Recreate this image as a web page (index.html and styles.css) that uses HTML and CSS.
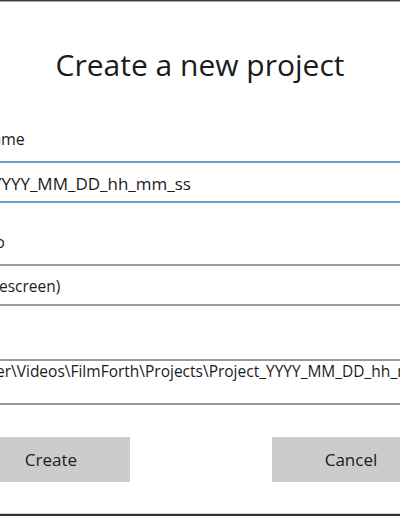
FILE: index.html
```html
<!DOCTYPE html>
<html lang="en">
<head>
<meta charset="utf-8">
<title>Create a new project</title>
<link rel="stylesheet" href="styles.css">
</head>
<body>
  <div class="dialog">
    <h1 class="title">Create a new project</h1>

    <div class="field field-name">
      <div class="label">Project name</div>
      <div class="box box-focus"><span class="box-text text-name">Project_YYYY_MM_DD_hh_mm_ss</span></div>
    </div>

    <div class="field field-ratio">
      <div class="label label-ratio">Aspect ratio</div>
      <div class="box box-ratio"><span class="box-text text-ratio">16:9 (Widescreen)</span></div>
    </div>

    <div class="field field-path">
      <div class="label">Location</div>
      <div class="box box-path"><span class="box-text text-path">C:\Users\User\Videos\FilmForth\Projects\Project_YYYY_MM_DD_hh_mm_ss</span></div>
    </div>

    <div class="actions">
      <button class="btn" type="button">Create</button>
      <button class="btn" type="button">Cancel</button>
    </div>
  </div>
</body>
</html>
```

FILE: styles.css
```css
* {
  box-sizing: border-box;
}

html {
  background: #ffffff;
}

body {
  margin: 0;
  width: 400px;
  height: 516px;
  overflow: hidden;
  background: #ffffff;
  border-top: 1px solid #3f3f3f;
  border-bottom: 2px solid #333333;
  box-shadow: inset 0 1px 0 #a8a8a8, inset 0 -1px 0 #d2d2d2;
  display: flex;
  justify-content: center;
  font-family: "Open Sans", "Noto Sans", sans-serif;
  color: #1b1b1b;
}

.dialog {
  flex: none;
  width: 600px;
  display: flex;
  flex-direction: column;
}

.title {
  margin: 44px 0 0;
  font-size: 30px;
  line-height: 40px;
  font-weight: 400;
  text-align: center;
  color: #1b1b1b;
}

.field {
  display: flex;
  flex-direction: column;
}

.field-name {
  margin-top: 43px;
}

.field-ratio {
  margin-top: 28px;
}

.field-path {
  margin-top: 20px;
}

.label {
  font-size: 16px;
  line-height: 22px;
  padding-left: 26px;
  margin-bottom: 11px;
  white-space: nowrap;
}

.label-ratio {
  padding-left: 16px;
}

.box {
  border: 2px solid #9a9a9a;
  background: #ffffff;
  overflow: hidden;
  white-space: nowrap;
  font-size: 15.5px;
  line-height: 20px;
}

.box-focus {
  border-color: #6aa3c7;
  height: 42px;
  padding-top: 11px;
  font-size: 17px;
}

.box-ratio {
  height: 42px;
  padding-top: 10px;
}

.box-path {
  height: 46px;
  padding-top: 0;
}

.box-text {
  display: block;
}

.text-name {
  padding-left: 27px;
}

.text-ratio {
  padding-left: 30px;
}

.text-path {
  padding-left: 9px;
}

.actions {
  margin-top: 32px;
  padding: 0 70px 0 72px;
  display: flex;
  justify-content: space-between;
}

.btn {
  width: 158px;
  height: 45px;
  border: none;
  border-radius: 0;
  background: #cccccc;
  font-family: "Open Sans", "Noto Sans", sans-serif;
  font-size: 17px;
  color: #1b1b1b;
  padding: 0;
}
```
